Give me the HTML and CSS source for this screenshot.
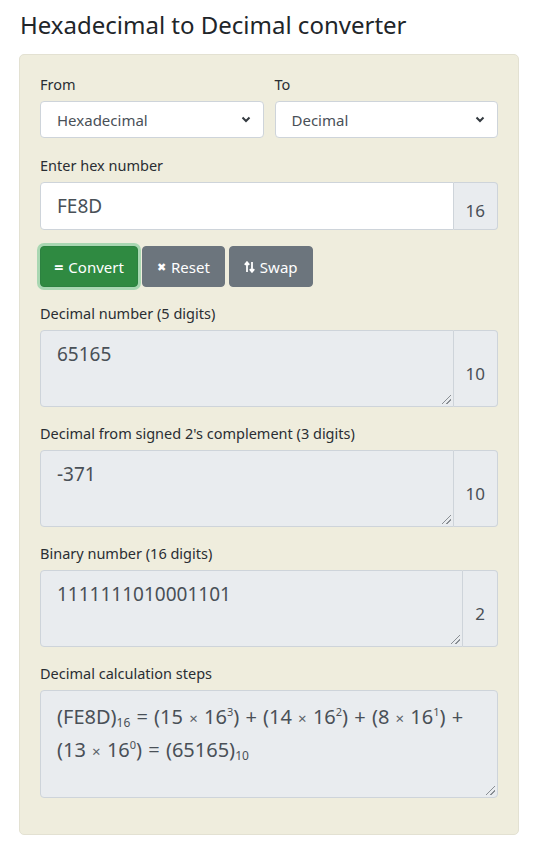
FILE: index.html
```html
<!DOCTYPE html>
<html>
<head>
<meta charset="utf-8">
<link rel="stylesheet" href="styles.css">
</head>
<body>
<div class="page">
  <h1 class="title">Hexadecimal to Decimal converter</h1>
  <div class="card">
    <div class="row">
      <div class="col">
        <label class="label">From</label>
        <div class="select"><span>Hexadecimal</span><svg class="chev" width="10" height="7" viewBox="0 0 10 7"><path d="M1.5 1.5 L5 5 L8.5 1.5" fill="none" stroke="#343a40" stroke-width="2"/></svg></div>
      </div>
      <div class="col">
        <label class="label">To</label>
        <div class="select"><span>Decimal</span><svg class="chev" width="10" height="7" viewBox="0 0 10 7"><path d="M1.5 1.5 L5 5 L8.5 1.5" fill="none" stroke="#343a40" stroke-width="2"/></svg></div>
      </div>
    </div>
    <div class="group">
      <label class="label">Enter hex number</label>
      <div class="igroup">
        <div class="input">FE8D</div>
        <div class="append">16</div>
      </div>
    </div>
    <div class="buttons">
      <button class="btn btn-green"><span class="ic">=</span> Convert</button>
      <button class="btn btn-gray"><span class="ic-x">✖</span> Reset</button>
      <button class="btn btn-gray"><svg class="swap" width="11" height="12" viewBox="0 0 11 12"><path d="M3 11 V1.5 M0.8 3.8 L3 1.2 L5.2 3.8 M8 1 V10.5 M5.8 8.2 L8 10.8 L10.2 8.2" fill="none" stroke="#fff" stroke-width="1.8"/></svg> Swap</button>
    </div>
    <div class="group">
      <label class="label">Decimal number (5 digits)</label>
      <div class="igroup">
        <div class="ta">65165<span class="grip"></span></div>
        <div class="append ro">10</div>
      </div>
    </div>
    <div class="group">
      <label class="label">Decimal from signed 2's complement (3 digits)</label>
      <div class="igroup">
        <div class="ta">-371<span class="grip"></span></div>
        <div class="append ro">10</div>
      </div>
    </div>
    <div class="group">
      <label class="label">Binary number (16 digits)</label>
      <div class="igroup">
        <div class="ta">1111111010001101<span class="grip"></span></div>
        <div class="append ro">2</div>
      </div>
    </div>
    <div class="group last">
      <label class="label">Decimal calculation steps</label>
      <div class="ta steps">(FE8D)<sub>16</sub> = (15 <span class="x">×</span> 16<sup>3</sup>) + (14 <span class="x">×</span> 16<sup>2</sup>) + (8 <span class="x">×</span> 16<sup>1</sup>) + <span class="nw">(13 <span class="x">×</span> 16<sup>0</sup>)</span> = (65165)<sub>10</sub><span class="grip"></span></div>
    </div>
  </div>
</div>
</body>
</html>
```
FILE: styles.css
```css
* { box-sizing: border-box; }
body {
  margin: 0;
  font-family: "Noto Sans", "Open Sans", sans-serif;
  color: #212529;
  background: #fff;
}
.page {
  padding: 7px 14px 0 19px;
}
.title {
  font-size: 24px;
  font-weight: 400;
  line-height: 36px;
  margin: 0 0 11px 1px;
  color: #212529;
}
.card {
  background: #efeddd;
  border: 1px solid #e3e1d2;
  border-radius: 5px;
  padding: 19px 20px 20px 20px;
}
.row {
  display: flex;
  gap: 11px;
  margin-bottom: 17px;
}
.col { flex: 1; }
.label {
  display: block;
  font-size: 14.5px;
  line-height: 21px;
  margin-bottom: 6px;
  color: #2a2e33;
}
.select {
  height: 37px;
  background: #fff;
  border: 1px solid #ced4da;
  border-radius: 4px;
  display: flex;
  align-items: center;
  justify-content: space-between;
  padding: 0 12px 0 16px;
  font-size: 15px;
  color: #495057;
}
.chev { display: block; }
.group { margin-bottom: 16px; }
.igroup {
  display: flex;
}
.input {
  flex: 1;
  height: 48px;
  background: #fff;
  border: 1px solid #ced4da;
  border-radius: 4px 0 0 4px;
  padding: 8px 16px;
  font-size: 19px;
  line-height: 30px;
  color: #495057;
}
.append {
  display: flex;
  align-items: center;
  padding: 8px 12px 0 12px;
  background: #e9ecef;
  border: 1px solid #ced4da;
  border-left: 0;
  border-radius: 0 4px 4px 0;
  font-size: 17px;
  color: #495057;
}
.buttons {
  display: flex;
  gap: 4px;
  margin-bottom: 16px;
}
.btn {
  height: 41px;
  border: 1px solid transparent;
  border-radius: 4px;
  font-family: inherit;
  font-size: 15px;
  color: #fff;
  padding: 0 14px;
  display: flex;
  align-items: center;
  gap: 5px;
}
.btn-green {
  background: #2f8a41;
  border-color: #2c8240;
  box-shadow: 0 0 0 3px #a9d7b2;
  width: 98px;
  justify-content: center;
}
.btn-gray {
  background: #6c757d;
  border-color: #6c757d;
}
.ic { font-weight: 700; font-size: 16px; }
.ic-x { font-size: 11px; }
.swap { display: block; }
.ta {
  position: relative;
  flex: 1;
  height: 77px;
  background: #e9ecef;
  border: 1px solid #ced4da;
  border-radius: 4px 0 0 4px;
  padding: 8px 16px;
  font-size: 19px;
  line-height: 30px;
  color: #495057;
}
.append.ro { padding-top: 10px; }
.steps {
  height: 108px;
  border-radius: 4px;
  padding-top: 11px;
  font-size: 20px;
  word-spacing: 1px;
}
.nw { white-space: nowrap; }
.steps sub {
  font-size: 12px;
  vertical-align: baseline;
  position: relative;
  top: 3px;
}
.steps sup {
  font-size: 11px;
  vertical-align: baseline;
  position: relative;
  top: -8px;
}
.x { font-size: 15px; color: #5a6168; }
.grip {
  position: absolute;
  right: 2px;
  bottom: 2px;
  width: 9px;
  height: 9px;
  background: linear-gradient(135deg, transparent 45%, #8a8f94 45%, #8a8f94 53%, transparent 53%, transparent 70%, #8a8f94 70%, #8a8f94 78%, transparent 78%);
}
```
